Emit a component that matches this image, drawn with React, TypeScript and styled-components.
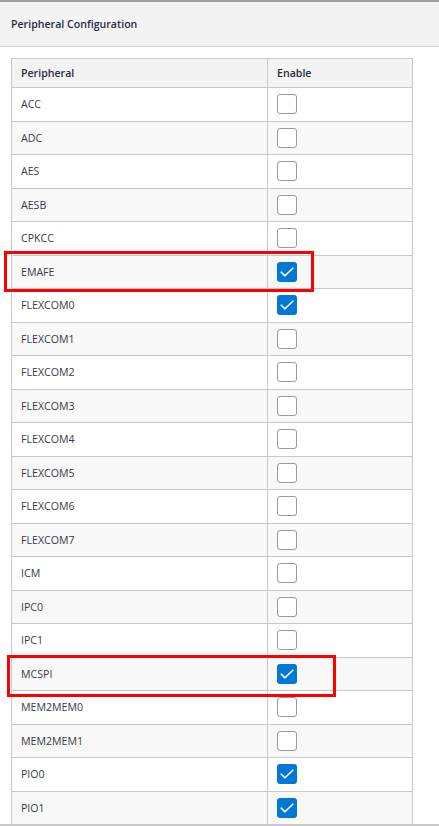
import React from 'react';
import styled, { createGlobalStyle } from 'styled-components';

const GlobalStyle = createGlobalStyle`
  html, body {
    margin: 0;
    padding: 0;
    background: #fff;
  }
  body {
    font-family: 'Open Sans', 'Noto Sans', sans-serif;
    color: #333;
  }
`;

type Mark = { left: number; width: number; top: number; bottom: number };

const peripherals: { name: string; enabled: boolean; mark?: Mark }[] = [
  { name: 'ACC', enabled: false },
  { name: 'ADC', enabled: false },
  { name: 'AES', enabled: false },
  { name: 'AESB', enabled: false },
  { name: 'CPKCC', enabled: false },
  { name: 'EMAFE', enabled: true, mark: { left: -8, width: 310, top: -5, bottom: -4 } },
  { name: 'FLEXCOM0', enabled: true },
  { name: 'FLEXCOM1', enabled: false },
  { name: 'FLEXCOM2', enabled: false },
  { name: 'FLEXCOM3', enabled: false },
  { name: 'FLEXCOM4', enabled: false },
  { name: 'FLEXCOM5', enabled: false },
  { name: 'FLEXCOM6', enabled: false },
  { name: 'FLEXCOM7', enabled: false },
  { name: 'ICM', enabled: false },
  { name: 'IPC0', enabled: false },
  { name: 'IPC1', enabled: false },
  { name: 'MCSPI', enabled: true, mark: { left: -5, width: 329, top: -3, bottom: -7 } },
  { name: 'MEM2MEM0', enabled: false },
  { name: 'MEM2MEM1', enabled: false },
  { name: 'PIO0', enabled: true },
  { name: 'PIO1', enabled: true },
];

const Panel = styled.div`
  width: 439px;
  height: 826px;
  overflow: hidden;
  border-top: 2px solid #a0a0a0;
  border-bottom: 2px solid #c8c8c8;
  box-sizing: border-box;
  background: #fff;
`;

const PanelHeader = styled.div`
  height: 44px;
  background: #f3f3f3;
  border-bottom: 1px solid #cfcfcf;
  display: flex;
  align-items: center;
  padding-left: 11px;
  font-size: 10.6px;
  font-weight: 600;
  color: #2b2b3a;
`;

const Body = styled.div`
  padding: 11px 0 0 11px;
`;

const Table = styled.div`
  width: 400px;
  border: 1px solid #c8c8c8;
  border-bottom: none;
  display: grid;
  grid-template-columns: 256px 1fr;
`;

const HeadCell = styled.div<{ $last?: boolean }>`
  height: 28px;
  background: #f3f3f3;
  border-bottom: 1px solid #c8c8c8;
  border-right: ${({ $last }) => ($last ? 'none' : '1px solid #c8c8c8')};
  display: flex;
  align-items: center;
  padding-left: 9px;
  font-size: 10.6px;
  font-weight: 600;
  color: #2b2b3a;
`;

const Cell = styled.div<{ $shaded: boolean; $last?: boolean }>`
  position: relative;
  height: 32.5px;
  background: ${({ $shaded }) => ($shaded ? '#f8f8f8' : '#fff')};
  border-bottom: 1px solid #c8c8c8;
  border-right: ${({ $last }) => ($last ? 'none' : '1px solid #c8c8c8')};
  display: flex;
  align-items: center;
  padding-left: 9px;
  font-size: 10.6px;
  color: #3a3a48;
`;

const Box = styled.span<{ $checked: boolean }>`
  width: 20px;
  height: 20px;
  box-sizing: border-box;
  border-radius: 3px;
  border: ${({ $checked }) => ($checked ? 'none' : '1px solid #9a9a9a')};
  background: ${({ $checked }) => ($checked ? '#0078d4' : '#fff')};
  display: flex;
  align-items: center;
  justify-content: center;
`;

const Highlight = styled.div<{ $mark: Mark }>`
  position: absolute;
  box-sizing: border-box;
  top: ${({ $mark }) => $mark.top}px;
  bottom: ${({ $mark }) => $mark.bottom}px;
  left: ${({ $mark }) => $mark.left}px;
  width: ${({ $mark }) => $mark.width}px;
  border: 3px solid #ff0000;
  pointer-events: none;
  z-index: 2;
`;

const Check = () => (
  <svg width="14" height="10" viewBox="0 0 14 10" fill="none">
    <path d="M1.2 5.2 L5 8.8 L12.8 1.2" stroke="#fff" strokeWidth="1.6" strokeLinecap="round" strokeLinejoin="round" />
  </svg>
);

const App: React.FC = () => (
  <>
    <GlobalStyle />
    <Panel>
      <PanelHeader>Peripheral Configuration</PanelHeader>
      <Body>
        <Table>
          <HeadCell>Peripheral</HeadCell>
          <HeadCell $last>Enable</HeadCell>
          {peripherals.map((p, i) => (
            <React.Fragment key={p.name}>
              <Cell $shaded={i % 2 === 1}>
                {p.mark && <Highlight $mark={p.mark} />}
                {p.name}
              </Cell>
              <Cell $shaded={i % 2 === 1} $last>
                <Box $checked={p.enabled}>{p.enabled && <Check />}</Box>
              </Cell>
            </React.Fragment>
          ))}
        </Table>
      </Body>
    </Panel>
  </>
);

export default App;
